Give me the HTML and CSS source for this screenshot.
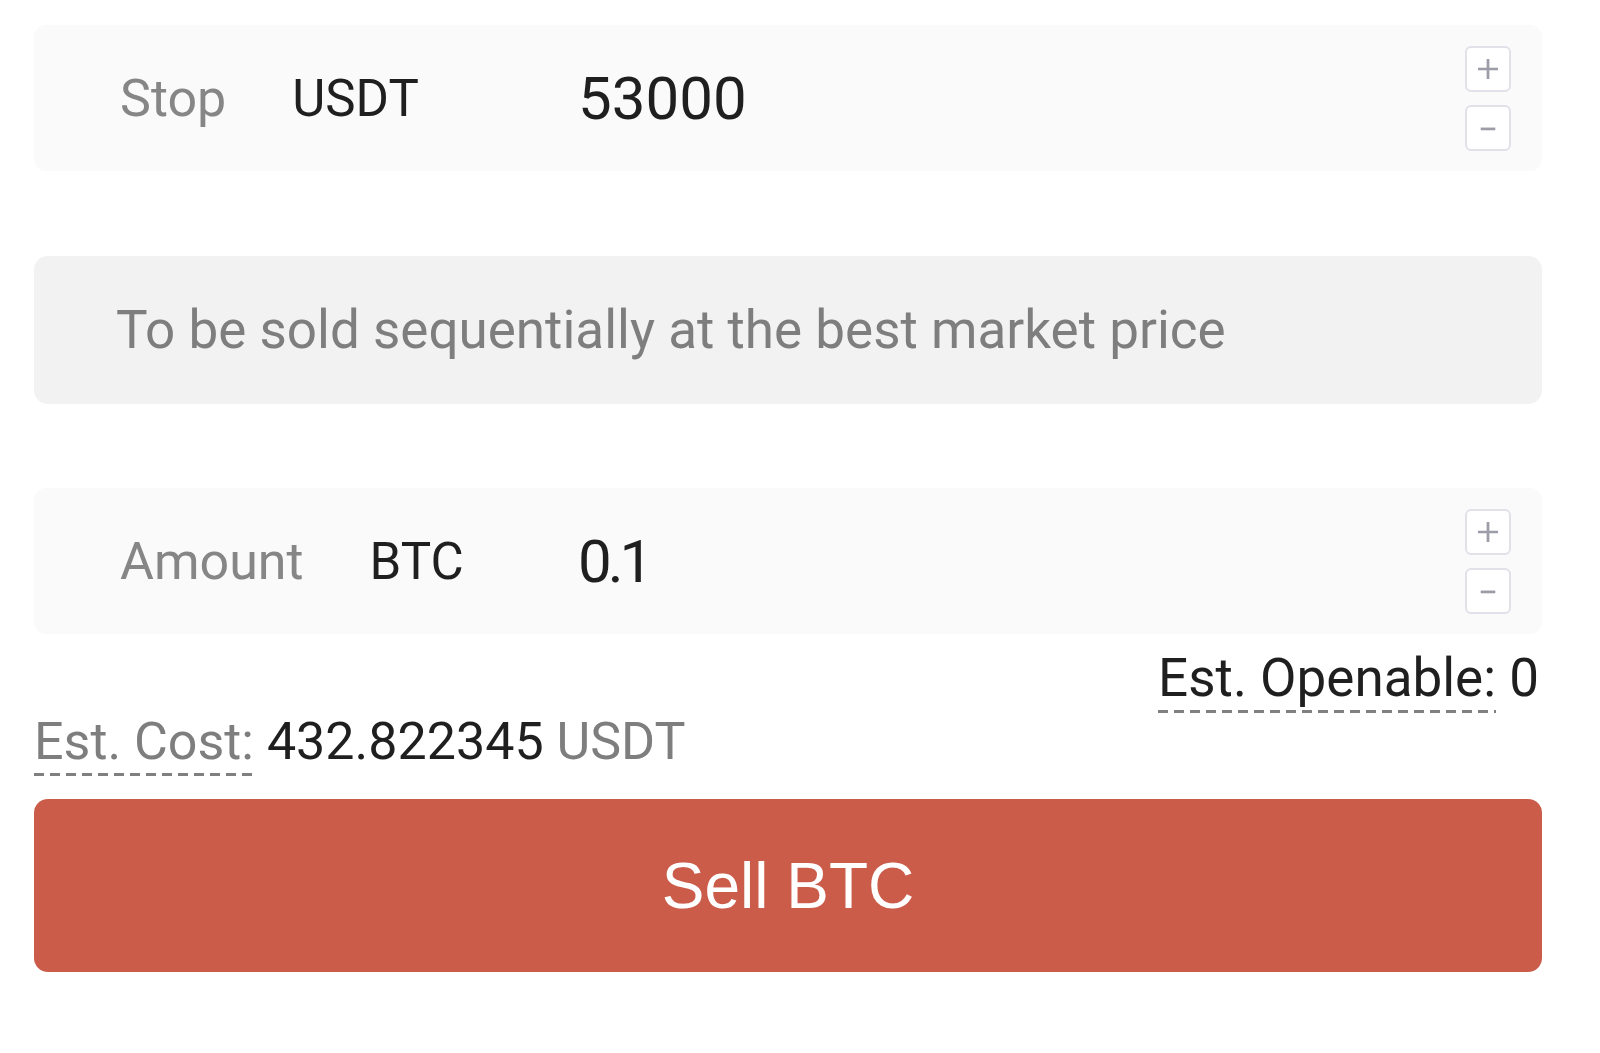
FILE: index.html
```html
<!DOCTYPE html>
<html lang="en">
<head>
<meta charset="utf-8">
<title>Stop order</title>
<link rel="stylesheet" href="styles.css">
</head>
<body>
<div class="panel">
  <div class="field">
    <div class="prefix"><span class="label">Stop</span><span class="unit">USDT</span></div>
    <span class="value">53000</span>
    <div class="stepper">
      <button class="step" aria-label="increase"><svg viewBox="0 0 46 46" width="46" height="46"><path d="M12 23H34M23 12V34" /></svg></button>
      <button class="step" aria-label="decrease"><svg viewBox="0 0 46 46" width="46" height="46"><path d="M15 24H31" /></svg></button>
    </div>
  </div>
  <div class="note">To be sold sequentially at the best market price</div>
  <div class="field">
    <div class="prefix"><span class="label">Amount</span><span class="unit">BTC</span></div>
    <span class="value tight">0.1</span>
    <div class="stepper">
      <button class="step" aria-label="increase"><svg viewBox="0 0 46 46" width="46" height="46"><path d="M12 23H34M23 12V34" /></svg></button>
      <button class="step" aria-label="decrease"><svg viewBox="0 0 46 46" width="46" height="46"><path d="M15 24H31" /></svg></button>
    </div>
  </div>
  <div class="openable"><span class="dash">Est. Openable:</span> 0</div>
  <div class="cost"><span class="dash muted">Est. Cost:</span> <span class="num">432.822345</span> <span class="muted">USDT</span></div>
  <button class="sell">Sell BTC</button>
</div>
</body>
</html>
```
FILE: styles.css
```css
html, body {
  margin: 0;
  padding: 0;
  background: #ffffff;
}
body {
  font-family: Roboto, "Liberation Sans", sans-serif;
  color: #1f1f1f;
}
.panel {
  width: 1508px;
  padding: 25px 0 0 34px;
  display: flex;
  flex-direction: column;
}
.field {
  height: 146px;
  background: #fafafa;
  border-radius: 12px;
  display: flex;
  align-items: center;
  padding: 0 31px 0 86px;
  box-sizing: border-box;
}
.prefix {
  width: 458px;
  display: flex;
  align-items: center;
  gap: 66px;
  flex: none;
}
.label {
  font-size: 52px;
  color: #868686;
}
.unit {
  font-size: 51px;
  color: #1f1f1f;
}
.value {
  font-size: 60px;
  color: #1f1f1f;
  flex: 1;
}
.value.tight {
  letter-spacing: -4px;
}
.stepper {
  display: flex;
  flex-direction: column;
  gap: 13px;
}
.step {
  width: 46px;
  height: 46px;
  padding: 0;
  margin: 0;
  border: 2px solid #e0e1e9;
  border-radius: 6px;
  background: #ffffff;
  display: flex;
  align-items: center;
  justify-content: center;
}
.step svg {
  width: 42px;
  height: 42px;
}
.step path {
  stroke: #9c9da8;
  stroke-width: 3;
  fill: none;
}
.note {
  margin-top: 85px;
  height: 148px;
  background: #f2f2f2;
  border-radius: 14px;
  display: flex;
  align-items: center;
  padding-left: 82px;
  font-size: 53px;
  color: #7e7e7e;
}
.note + .field {
  margin-top: 84px;
}
.openable {
  margin-top: 12px;
  line-height: 64px;
  font-size: 53px;
  text-align: right;
  padding-right: 3px;
  color: #1f1f1f;
}
.cost {
  line-height: 64px;
  font-size: 52px;
  color: #1f1f1f;
}
.dash {
  padding-bottom: 4px;
  background-image: linear-gradient(to right, #808080 62%, transparent 62%);
  background-size: 16px 3px;
  background-repeat: repeat-x;
  background-position: left bottom;
}
.muted {
  color: #7e7e7e;
}
.num {
  color: #1f1f1f;
}
.sell {
  margin-top: 25px;
  height: 173px;
  border: none;
  border-radius: 14px;
  background: #cb5c4a;
  color: #ffffff;
  font-family: "Liberation Sans", Arial, sans-serif;
  font-size: 64px;
  padding: 0;
}
```
